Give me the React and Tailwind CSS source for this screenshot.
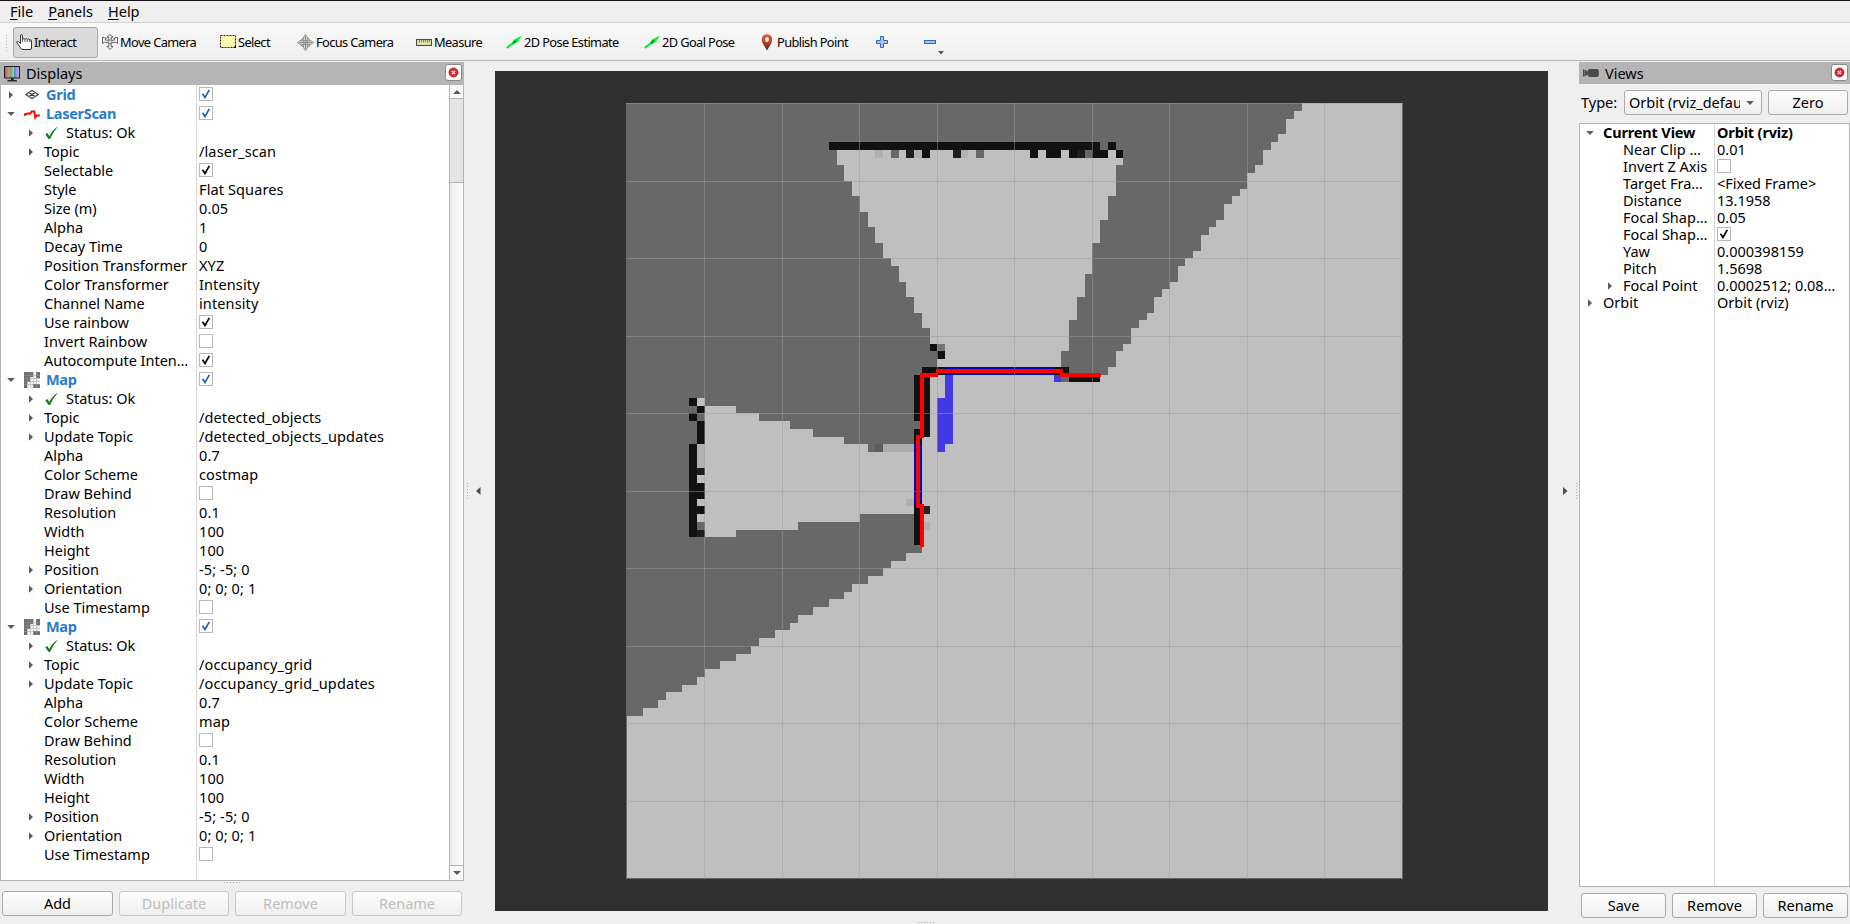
import React from 'react';

/* ---------- icons ---------- */

const HandIcon = () => (
  <svg width="16" height="16" viewBox="0 0 16 16" className="shrink-0">
    <path d="M4.500 9.500V1.800Q4.500 .6 5.500 .6T6.500 1.800V5.500Q8 4 8.800 5.200Q10.500 4 11.300 5.400Q13 4.300 13.700 5.800Q15.500 5.500 15.500 7V14Q15.500 15.500 14 15.500H6Q5.300 15.500 4.500 13.800L1 9Q.3 7.500 1.600 7.400Q2.700 7.400 4.500 9.500Z" fill="#fff" stroke="#333" strokeWidth="1" />
    <path d="M6.500 5.500V8M8.900 5.500V8M11.300 5.700V8M13.700 6V8" stroke="#444" strokeWidth=".9" />
  </svg>
);

const MoveIcon = () => (
  <svg width="16" height="16" viewBox="0 0 16 16" className="shrink-0">
    <g fill="#f4f4f4" stroke="#555" strokeWidth=".9">
      <path d="M8 .5L11 3.200H9.200V7H6.800V3.200H5Z" />
      <path d="M8 15.500L11 12.500H9.200V9H6.800V12.500H5Z" />
      <path d="M.5 3.200V9.500L2.500 8.200L6.500 9V6.500L3 5.800L4.500 4.500Z" />
      <path d="M15.500 3.200V9.500L13.500 8.200L9.500 9V6.500L13 5.800L11.500 4.500Z" />
    </g>
    <circle cx="8" cy="7.800" r="2" fill="#ddd" stroke="#777" strokeWidth=".9" />
  </svg>
);

const SelectIcon = () => (
  <svg width="16" height="14" viewBox="0 0 16 14" className="shrink-0">
    <rect x=".5" y=".5" width="15" height="12" fill="#fcf8ac" stroke="#222" strokeDasharray="2 1" />
    <path d="M16 10V13H13Z" fill="#111" />
  </svg>
);

const FocusIcon = () => (
  <svg width="17" height="17" viewBox="0 0 17 17" className="shrink-0">
    <circle cx="8.500" cy="8.500" r="4.800" fill="#ececec" stroke="#858585" strokeWidth="1.300" />
    <path d="M8.500 .3L10.300 3V14L8.500 16.700L6.700 14V3Z M.3 8.500L3 6.700H14L16.700 8.500L14 10.300H3Z" fill="#ddd" stroke="#858585" strokeWidth=".8" />
    <path d="M8.500 2V15M2 8.500H15" stroke="#8a8a8a" strokeWidth=".9" />
    <circle cx="8.500" cy="8.500" r="1.300" fill="#999" />
  </svg>
);

const MeasureIcon = () => (
  <svg width="16" height="7" viewBox="0 0 16 7" className="shrink-0">
    <rect x=".5" y=".5" width="15" height="6" fill="#e2dcaa" stroke="#4c4a42" />
    <path d="M3.500 1V3.500M5.500 1V3M7.500 1V3.500M9.500 1V3M11.500 1V3.500M13.500 1V3" stroke="#6b6857" strokeWidth=".8" />
  </svg>
);

const ArrowIcon = () => (
  <svg width="16" height="14" viewBox="0 0 16 14" className="shrink-0">
    <path d="M.8 12.800L7.500 7.800" stroke="#06f03a" strokeWidth="2.200" />
    <path d="M16 .5L11.500 7.500L9.800 7.400L7.500 9.500L5.500 8.600L7.800 4.800Z" fill="#06f03a" />
    <path d="M7.200 8.200L10 5.800" stroke="#0a8a2a" strokeWidth="1.800" />
  </svg>
);

const PinIcon = () => (
  <svg width="12" height="17" viewBox="0 0 12 17" className="shrink-0">
    <defs>
      <linearGradient id="pin" x1="0" y1="0" x2="0" y2="1">
        <stop offset="0" stopColor="#ee5a38" />
        <stop offset=".5" stopColor="#b04526" />
        <stop offset="1" stopColor="#3a2c18" />
      </linearGradient>
    </defs>
    <path d="M6 .3Q11.200 .3 11.200 5.800Q11.200 8.500 9 11.500Q7 14.500 6 16.500Q5 14.500 3 11.500Q.8 8.500 .8 5.800Q.8 .3 6 .3Z" fill="url(#pin)" />
    <ellipse cx="6" cy="5.500" rx="2" ry="2.600" fill="#f3eeee" />
  </svg>
);

const PlusIcon = () => (
  <svg width="12" height="12" viewBox="0 0 12 12">
    <path d="M4.500 .5H7.500V4.500H11.500V7.500H7.500V11.500H4.500V7.500H.5V4.500H4.500Z" fill="#a4c3e8" stroke="#3b69a8" />
  </svg>
);

const MinusIcon = () => (
  <svg width="12" height="4" viewBox="0 0 12 4">
    <rect x=".5" y=".5" width="11" height="3" fill="#a4c3e8" stroke="#3b69a8" />
  </svg>
);

const MonitorIcon = () => (
  <svg width="17" height="16" viewBox="0 0 17 16">
    <defs>
      <linearGradient id="mon" x1="0" y1="0" x2="1" y2="0">
        <stop offset="0" stopColor="#b55" /><stop offset=".33" stopColor="#d99" />
        <stop offset=".34" stopColor="#5a6" /><stop offset=".65" stopColor="#9d9" />
        <stop offset=".66" stopColor="#77c" /><stop offset="1" stopColor="#bbf" />
      </linearGradient>
    </defs>
    <rect x=".5" y=".5" width="15" height="11.500" fill="url(#mon)" stroke="#1c1c1c" />
    <path d="M7 12H9.500V14H7Z" fill="#222" />
    <path d="M3.500 15Q8 13 13 15Z" fill="#222" stroke="#222" strokeWidth=".8" />
  </svg>
);

const CameraIcon = () => (
  <svg width="16" height="8" viewBox="0 0 16 8">
    <path d="M0 .3L4.800 2.300V5.700L0 7.700Z" fill="#4a4a4a" />
    <rect x="4.800" y="0" width="11" height="8" rx="2" fill="#4a4a4a" />
    <path d="M1.600 1V7" stroke="#777" strokeWidth=".8" />
  </svg>
);

const GridIcon = () => (
  <svg width="16" height="16" viewBox="0 0 16 16" className="shrink-0">
    <path d="M8 3.500L14.300 7.500L8 11.500L1.700 7.500ZM4.800 5.500L11.200 9.500M11.200 5.500L4.800 9.500" fill="none" stroke="#3c3c3c" strokeWidth="1.100" />
  </svg>
);

const LaserIcon = () => (
  <svg width="16" height="16" viewBox="0 0 16 16" className="shrink-0">
    <path d="M.8 10V8.500L3.500 7.500H6.500L7.500 5.500H10.500V8L11.300 11.700L12.800 9.500H15.800" fill="none" stroke="#f00" strokeWidth="1.900" />
  </svg>
);

const MapIcon = () => (
  <svg width="16" height="16" viewBox="0 0 16 16" className="shrink-0" shapeRendering="crispEdges">
    <rect width="16" height="16" fill="#f6f6f6" />
    <path d="M0 0H9V5H6V10H3V16H0ZM12 0H16V6H12ZM9 12H16V16H9Z" fill="#6e6e6e" />
    <path d="M3.500 0V16M6.500 0V16M9.500 0V16M12.500 0V16M0 3.500H16M0 6.500H16M0 9.500H16M0 12.500H16" stroke="#9a9a9a" strokeOpacity=".55" />
  </svg>
);

const OkIcon = () => (
  <svg width="14" height="14" viewBox="0 0 14 14" className="shrink-0">
    <path d="M.3 8.200L2.300 6.900L4.300 10Q7.500 3.500 13 .5Q8 6 5 13H3.500Z" fill="#1a7d1a" />
  </svg>
);

const Caret = ({ open }) => (
  <svg width="8" height="8" viewBox="0 0 8 8" className="shrink-0">
    <path d={open ? 'M.2 2H7.800L4 6Z' : 'M2 .3V7.700L6 4Z'} fill="#5c5c5c" />
  </svg>
);

const ICONS = { grid: GridIcon, laser: LaserIcon, map: MapIcon };

/* ---------- small widgets ---------- */

function Check({ on, blue }) {
  return (
    <span className="-mt-px flex h-[14px] w-[14px] items-center justify-center border border-[#b8b8b8] bg-white">
      {on && (
        <svg width="10" height="10" viewBox="0 0 10 10">
          <path d="M1.500 4.800L4 8.500L8.300 .8" fill="none" stroke={blue ? '#2465a8' : '#000'} strokeWidth="1.700" />
        </svg>
      )}
    </span>
  );
}

function CloseButton() {
  return (
    <span className="-mt-[2px] flex h-[17px] w-[17px] items-center justify-center rounded-[3px] border border-[#8c8c8c] bg-white">
      <svg width="11" height="11" viewBox="0 0 11 11">
        <circle cx="5.500" cy="5.500" r="4.600" fill="#d42a2a" stroke="#b02424" strokeWidth=".7" />
        <path d="M3.900 3.900L7.100 7.100M7.100 3.900L3.900 7.100" stroke="#fff" strokeWidth="1.300" />
      </svg>
    </span>
  );
}

function Button({ children, disabled, className }) {
  return (
    <button
      className={`flex h-[25px] items-center justify-center rounded-[3px] border bg-linear-to-b from-[#fdfdfd] to-[#efefef] ${
        disabled ? 'border-[#c8c8c8] text-[#bebebe]' : 'border-[#aaa] text-black'
      } ${className}`}
    >
      {children}
    </button>
  );
}

const DotsV = () => <span className="h-[17px] w-px bg-[repeating-linear-gradient(to_bottom,#aaa_0_1px,transparent_1px_3px)]" />;
const DotsH = () => <span className="h-px w-[17px] bg-[repeating-linear-gradient(to_right,#aaa_0_1px,transparent_1px_3px)]" />;

/* ---------- data ---------- */

const TOOLS = [
  { label: 'Interact', Icon: HandIcon, w: 'w-[85px]', active: true },
  { label: 'Move Camera', Icon: MoveIcon, w: 'ml-px w-[118px]' },
  { label: 'Select', Icon: SelectIcon, w: 'w-[77px]' },
  { label: 'Focus Camera', Icon: FocusIcon, w: 'w-[119px]' },
  { label: 'Measure', Icon: MeasureIcon, w: 'w-[90px]' },
  { label: '2D Pose Estimate', Icon: ArrowIcon, w: 'w-[138px]' },
  { label: '2D Goal Pose', Icon: ArrowIcon, w: 'w-[117px]' },
  { label: 'Publish Point', Icon: PinIcon, w: 'w-[115px]', gap: true },
];

const mapRows = (topic) => [
  { icon: 'map', name: 'Map', check: true },
  { status: true },
  { name: 'Topic', value: topic, caret: true },
  { name: 'Update Topic', value: topic + '_updates', caret: true },
  { name: 'Alpha', value: '0.7' },
  { name: 'Color Scheme', value: topic === '/detected_objects' ? 'costmap' : 'map' },
  { name: 'Draw Behind', check: false },
  { name: 'Resolution', value: '0.1' },
  { name: 'Width', value: '100' },
  { name: 'Height', value: '100' },
  { name: 'Position', value: '-5; -5; 0', caret: true },
  { name: 'Orientation', value: '0; 0; 0; 1', caret: true },
  { name: 'Use Timestamp', check: false },
];

const DISPLAYS = [
  { icon: 'grid', name: 'Grid', check: true, closed: true },
  { icon: 'laser', name: 'LaserScan', check: true },
  { status: true },
  { name: 'Topic', value: '/laser_scan', caret: true },
  { name: 'Selectable', check: true },
  { name: 'Style', value: 'Flat Squares' },
  { name: 'Size (m)', value: '0.05' },
  { name: 'Alpha', value: '1' },
  { name: 'Decay Time', value: '0' },
  { name: 'Position Transformer', value: 'XYZ' },
  { name: 'Color Transformer', value: 'Intensity' },
  { name: 'Channel Name', value: 'intensity' },
  { name: 'Use rainbow', check: true },
  { name: 'Invert Rainbow', check: false },
  { name: 'Autocompute Inten…', check: true },
  ...mapRows('/detected_objects'),
  ...mapRows('/occupancy_grid'),
];

const VIEWS = [
  { name: 'Near Clip …', value: '0.01' },
  { name: 'Invert Z Axis', check: false },
  { name: 'Target Fra…', value: '<Fixed Frame>' },
  { name: 'Distance', value: '13.1958' },
  { name: 'Focal Shap…', value: '0.05' },
  { name: 'Focal Shap…', check: true },
  { name: 'Yaw', value: '0.000398159' },
  { name: 'Pitch', value: '1.5698' },
  { name: 'Focal Point', value: '0.0002512; 0.08…', caret: true },
];

/* ---------- panels ---------- */

function DisplayRow({ row }) {
  const Icon = row.icon && ICONS[row.icon];
  return (
    <div className="flex h-[19px] items-center">
      <div className="flex h-full w-[195px] shrink-0 items-center overflow-hidden">
        {Icon ? (
          <>
            <span className="ml-[6px] flex"><Caret open={!row.closed} /></span>
            <span className="ml-[9px] flex"><Icon /></span>
            <span className="ml-[6px] font-bold tracking-[-0.3px] text-[#2a7bcc]">{row.name}</span>
          </>
        ) : (
          <>
            <span className="ml-[26px] flex w-[17px]">{(row.caret || row.status) && <Caret />}</span>
            {row.status ? (
              <>
                <span className="ml-px flex w-[21px]"><OkIcon /></span>
                <span>Status: Ok</span>
              </>
            ) : (
              <span>{row.name}</span>
            )}
          </>
        )}
      </div>
      <div className="flex items-center pl-[3px] tracking-[0.120px]">
        {row.check !== undefined ? <Check on={row.check} blue={!!row.icon} /> : row.value}
      </div>
    </div>
  );
}

function DisplaysPanel() {
  return (
    <section className="flex w-[464px] flex-col pt-px">
      <header className="flex h-[23px] items-center bg-[#b5b5b5] pl-[4px] pr-[2px]">
        <MonitorIcon />
        <span className="ml-[5px] flex-1">Displays</span>
        <CloseButton />
      </header>
      <div className="flex h-[796px] border border-t-0 border-[#b4b4b4] bg-white">
        <div className="flex-1 whitespace-nowrap bg-[linear-gradient(#d8d8d8,#d8d8d8)] bg-[size:1px_100%] bg-[position:195px_0] bg-no-repeat">
          {DISPLAYS.map((row, i) => <DisplayRow key={i} row={row} />)}
        </div>
        <div className="flex w-[14px] flex-col border-l border-[#b4b4b4] bg-linear-to-r from-[#ececec] to-[#fdfdfd]">
          <span className="flex h-[14px] items-center justify-center border-b border-[#b4b4b4] bg-[#f8f8f8]">
            <svg width="8" height="4" viewBox="0 0 8 4"><path d="M0 4H8L4 0Z" fill="#5c5c5c" /></svg>
          </span>
          <span className="h-[84px] border-b border-[#b4b4b4] bg-[#e5e5e5]" />
          <span className="flex-1" />
          <span className="flex h-[15px] items-center justify-center border-t border-[#b4b4b4] bg-[#f8f8f8]">
            <svg width="8" height="4" viewBox="0 0 8 4"><path d="M0 0H8L4 4Z" fill="#5c5c5c" /></svg>
          </span>
        </div>
      </div>
      <div className="flex h-[10px] justify-center pt-px"><DotsH /></div>
      <div className="flex gap-[6px] pl-[2px]">
        <Button className="w-[111px]">Add</Button>
        <Button disabled className="w-[110px]">Duplicate</Button>
        <Button disabled className="w-[111px]">Remove</Button>
        <Button disabled className="w-[110px]">Rename</Button>
      </div>
    </section>
  );
}

function ViewsPanel() {
  return (
    <section className="flex w-[271px] flex-col pt-px">
      <header className="flex h-[22px] items-center bg-[#b5b5b5] pl-[4px] pr-[2px]">
        <CameraIcon />
        <span className="ml-[6px] flex-1">Views</span>
        <CloseButton />
      </header>
      <div className="mt-[6px] flex h-[25px] items-center pl-[2px]">
        <span className="w-[43px]">Type:</span>
        <div className="flex h-[25px] w-[138px] items-center rounded-[3px] border border-[#aaa] bg-linear-to-b from-[#fdfdfd] to-[#efefef] pl-[4px]">
          <span className="-mt-px w-[111px] overflow-hidden whitespace-nowrap leading-[20px]">Orbit (rviz_defau</span>
          <span className="ml-[6px] flex"><Caret open /></span>
        </div>
        <Button className="ml-[6px] w-[80px]">Zero</Button>
      </div>
      <div className="mt-[8px] h-[764px] whitespace-nowrap border border-[#b4b4b4] bg-white bg-[linear-gradient(#d8d8d8,#d8d8d8)] bg-[size:1px_100%] bg-[position:134px_0] bg-no-repeat">
        <div className="flex h-[17px] items-center font-bold tracking-[-0.150px]">
          <span className="ml-[6px] flex w-[17px]"><Caret open /></span>
          <span className="w-[114px]">Current View</span>
          <span>Orbit (rviz)</span>
        </div>
        {VIEWS.map((row, i) => (
          <div key={i} className="flex h-[17px] items-center">
            <span className="ml-[26px] flex w-[17px]">{row.caret && <Caret />}</span>
            <span className="w-[94px]">{row.name}</span>
            {row.check !== undefined ? <Check on={row.check} /> : <span>{row.value}</span>}
          </div>
        ))}
        <div className="flex h-[17px] items-center">
          <span className="ml-[6px] flex w-[17px]"><Caret /></span>
          <span className="w-[114px]">Orbit</span>
          <span>Orbit (rviz)</span>
        </div>
      </div>
      <div className="mt-[6px] flex gap-[6px] pl-[2px]">
        <Button className="w-[85px]">Save</Button>
        <Button className="w-[85px]">Remove</Button>
        <Button className="w-[85px]">Rename</Button>
      </div>
    </section>
  );
}

/* ---------- render view ---------- */

// Outline of unexplored space, in grid cells (0.1 m each).
const UNKNOWN =
  'M0 0H87V1H86V2H85V4H84V5H83V6H82V8H81V9H80V11H79V12H78V13H77V15H76V16H75V17H74V19H73V20H72V21H71V23H70V24H69V25H68V27H67V28H66V29H65V31H64V32H63V34H62V35H38V58H36V59H34V60H33V61H31V62H29V63H28V64H26V65H24V66H22V67H21V68H19V69H17V70H16V71H14V72H12V73H10V74H9V75H7V76H5V77H4V78H2V79H0Z';
const FREE =
  'M27 6V8H28V10H29V12H30V14H31V16H32V18H33V20H34V21H35V23H36V25H37V27H38V29H39V32H40V34H56V32H57V28H58V25H59V22H60V18H61V15H62V12H63V8H64V6Z M10 39H14V40H17V41H21V42H24V43H28V44H31V45H38V53H30V54H22V55H14V56H10Z';

// [column, row, width, height, colour]
const K = '#111111', D = '#1e1e1e', G = '#686868', L = '#b1b1b1', F = '#bfbfbf', B = '#0404b4', V = '#4339e6';
const CELLS = [
  [26, 5, 35, 1, K], [62, 5, 1, 1, K],
  [32, 6, 1, 1, L], [34, 6, 1, 1, G], [36, 6, 1, 1, D], [37, 6, 1, 1, L], [38, 6, 1, 1, K],
  [42, 6, 1, 1, D], [43, 6, 1, 1, L], [45, 6, 1, 1, G], [52, 6, 1, 1, K], [54, 6, 2, 1, K],
  [57, 6, 1, 1, K], [58, 6, 1, 1, D], [59, 6, 1, 1, G], [60, 6, 2, 1, K], [63, 6, 1, 1, K],
  [39, 31, 1, 1, K], [40, 31, 1, 1, '#757575'], [40, 32, 1, 1, K],
  [8, 38, 1, 1, K], [8, 40, 1, 1, K], [8, 44, 1, 12, K],
  [9, 38, 1, 1, F], [9, 39, 1, 1, K], [9, 41, 1, 3, K], [9, 44, 1, 3, L], [9, 47, 1, 1, D],
  [9, 48, 1, 1, F], [9, 49, 1, 2, K], [9, 51, 1, 1, F], [9, 52, 1, 1, K], [9, 53, 1, 1, F], [9, 55, 1, 1, D],
  [32, 44, 1, 1, '#5e5e5e'], [33, 44, 4, 1, '#acacac'], [36, 51, 1, 1, L],
  [37, 35, 1, 6, K], [37, 42, 1, 2, K], [37, 44, 1, 8, B], [37, 52, 1, 5, K],
  [38, 34, 1, 9, K], [38, 52, 1, 1, '#262626'], [38, 54, 1, 1, L],
  [39, 34, 2, 1, K], [41, 34, 14, 1, B], [55, 34, 2, 1, K],
  [41, 35, 1, 9, V], [40, 38, 1, 7, V], [55, 35, 1, 1, V], [56, 35, 1, 1, G], [57, 35, 4, 1, K],
];

// Laser returns, in view pixels: [x, y, width, height]
const SCAN = [
  [920, 373, 18, 4], [936, 369, 127, 4], [1060, 373, 41, 4],
  [920, 373, 4, 65], [916, 435, 4, 73], [916, 504, 8, 4], [920, 504, 4, 43],
];
const GRID_X = [626, 704, 782, 859, 937, 1014, 1092, 1169, 1247, 1324, 1402];
const GRID_Y = [103, 181, 258, 336, 413, 491, 568, 646, 723, 801, 878];

function RenderView() {
  return (
    <svg width="1053" height="840" viewBox="495 71 1053 840" className="block bg-[#303030]" shapeRendering="crispEdges">
      <g transform="translate(627.4 103.4) scale(7.75)">
        <rect width="100" height="100" fill={F} />
        <path d={UNKNOWN} fill={G} />
        <path d={FREE} fill={F} />
        {CELLS.map(([x, y, w, h, c], i) => <rect key={i} x={x} y={y} width={w} height={h} fill={c} />)}
      </g>
      <g fill="#9e9e9e" fillOpacity=".48">
        {GRID_X.map((x) => <rect key={x} x={x} y="103" width="1" height="776" />)}
        {GRID_Y.map((y) => <rect key={y} x="626" y={y} width="777" height="1" />)}
      </g>
      <g fill="#ff0000">
        {SCAN.map(([x, y, w, h], i) => <rect key={i} x={x} y={y} width={w} height={h} />)}
      </g>
    </svg>
  );
}

/* ---------- window ---------- */

const MENU = ['File', 'Panels', 'Help'];

export default function App() {
  return (
    <div className="flex h-[924px] w-[1850px] flex-col overflow-hidden border-t border-[#1a1015] bg-[#efefef] font-['Noto_Sans',sans-serif] text-[14.500px] leading-none tracking-[0px] text-black">
      <nav className="flex h-[22px] items-center gap-[15px] border-b border-[#d0d0d0] pl-[10px]">
        {MENU.map((m) => (
          <span key={m}><u className="decoration-1 underline-offset-2">{m[0]}</u>{m.slice(1)}</span>
        ))}
      </nav>
      <div className="flex h-[38px] items-center border-b border-[#b8b8b8] bg-linear-to-b from-[#f9f9f9] to-[#efefef] pt-px text-[12.800px] tracking-[-0.600px]">
        <span className="ml-[5px] mr-[4px] h-[17px] w-[4px] bg-[radial-gradient(#b4b4b4_0.600px,transparent_0.800px)] bg-[size:3px_3px]" />
        {TOOLS.map(({ label, Icon, w, active, gap }) => (
          <div key={label} className={`flex h-[31px] items-center whitespace-nowrap rounded-[3px] border pl-[2px] ${gap ? 'gap-[4px]' : 'gap-[2px]'} ${w} ${active ? 'border-[#a8a8a8] bg-[#dadada]' : 'border-transparent'}`}>
            <Icon />
            <span>{label}</span>
          </div>
        ))}
        <span className="flex w-[48px] pl-[3px]"><PlusIcon /></span>
        <span className="flex pl-[3px]"><MinusIcon /></span>
        <svg width="6" height="4" viewBox="0 0 6 4" className="ml-[2px] mt-[21px]"><path d="M0 0H6L3 3.500Z" fill="#555" /></svg>
      </div>
      <main className="flex flex-1">
        <DisplaysPanel />
        <div className="flex w-[31px] items-center pb-[3px]">
          <span className="ml-[3px] flex"><DotsV /></span>
          <svg width="5" height="8" viewBox="0 0 5 8" className="ml-[8px]"><path d="M4.500 0V8L0 4Z" fill="#4c4c4c" /></svg>
        </div>
        <div className="flex w-[1053px] flex-col pt-[10px]">
          <RenderView />
          <div className="flex h-[13px] items-end justify-center pb-px pr-[190px]"><DotsH /></div>
        </div>
        <div className="flex w-[31px] items-center pb-[3px]">
          <svg width="5" height="8" viewBox="0 0 5 8" className="ml-[15px]"><path d="M0 0V8L4.500 4Z" fill="#4c4c4c" /></svg>
          <span className="ml-[8px] flex"><DotsV /></span>
        </div>
        <ViewsPanel />
      </main>
    </div>
  );
}
